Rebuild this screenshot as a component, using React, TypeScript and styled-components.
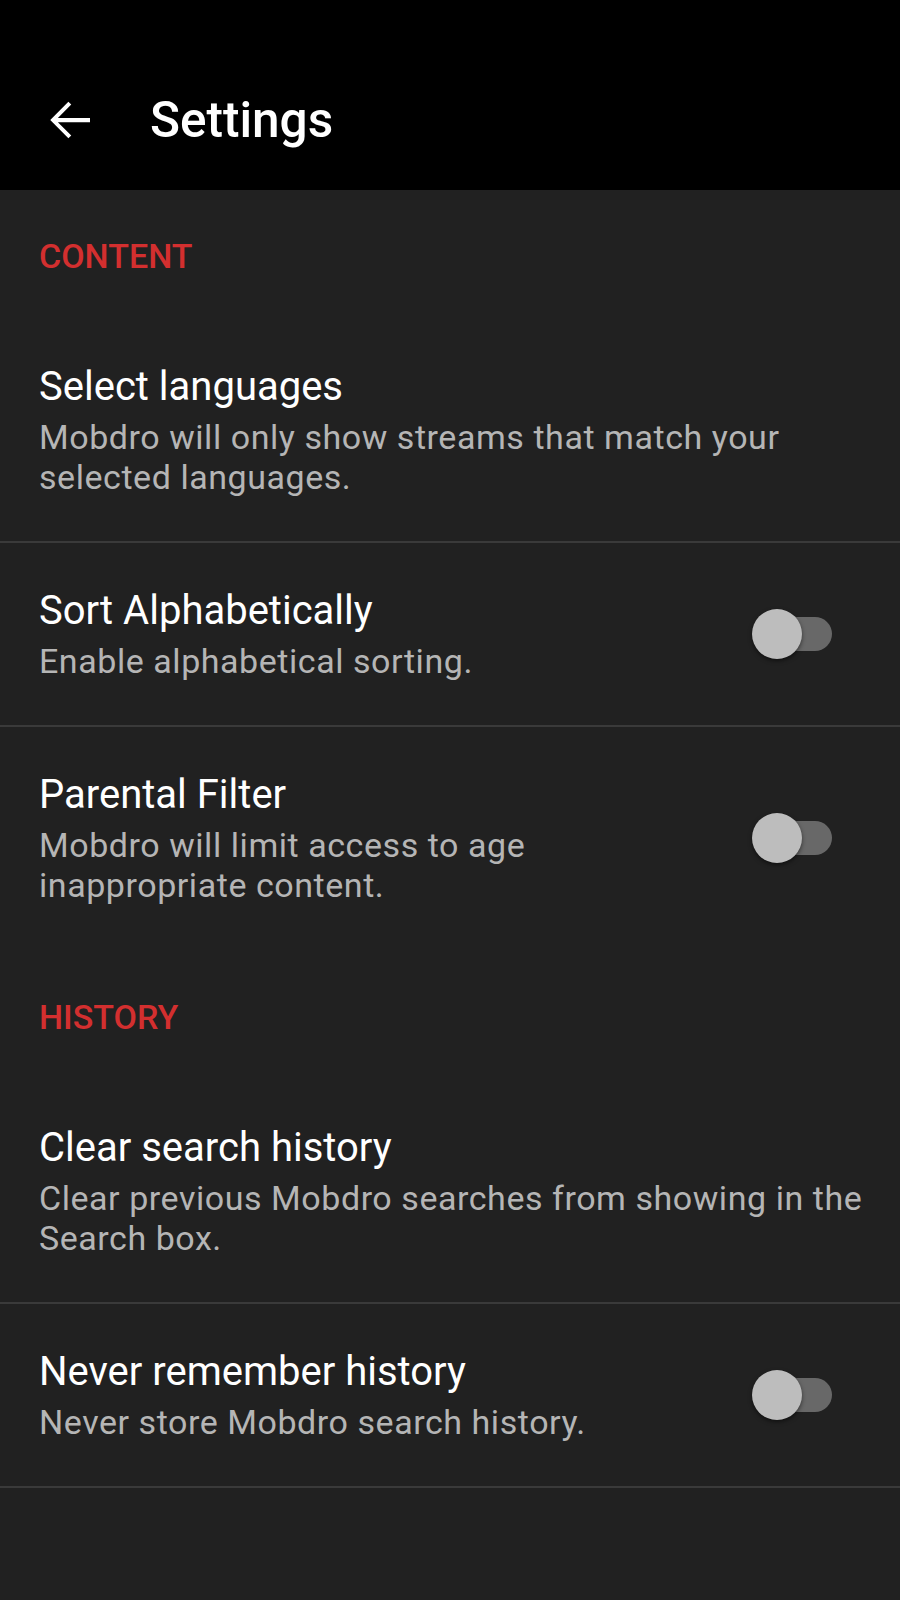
import React, { FC } from 'react'
import styled, { createGlobalStyle } from 'styled-components'

const GlobalStyle = createGlobalStyle`
  html, body {
    margin: 0;
    padding: 0;
    background-color: #212121;
  }
  body {
    font-family: Roboto, 'Liberation Sans', Arial, sans-serif;
    -webkit-font-smoothing: antialiased;
  }
`

const Screen = styled.div`
  min-height: 1600px;
  background-color: #212121;
  display: flex;
  flex-direction: column;
`

const AppBar = styled.header`
  height: 140px;
  padding-top: 50px;
  background-color: #000;
  display: flex;
  align-items: center;
  padding-left: 40px;
`

const BackButton = styled.button`
  width: 60px;
  height: 60px;
  padding: 0;
  margin-right: 50px;
  border: none;
  background: none;
  color: #fff;
  display: flex;
  align-items: center;
  justify-content: center;
  cursor: pointer;
`

const AppBarTitle = styled.h1`
  margin: 0;
  color: #fff;
  font-size: 49.5px;
  font-weight: 500;
  line-height: 56px;
`

const Category = styled.h2`
  margin: 0;
  padding: 46px 39px 43px;
  color: #d32f2f;
  font-size: 34px;
  font-weight: 500;
  line-height: 40px;
`

const PrefRow = styled.div<{ $divider?: boolean }>`
  display: flex;
  align-items: center;
  padding: 44px 20px 44px 39px;
  border-bottom: 2px solid ${(p) => (p.$divider ? '#3a3a3a' : 'transparent')};
`

const PrefText = styled.div<{ $withWidget?: boolean }>`
  flex: 1;
  min-width: 0;
  margin-right: ${(p) => (p.$withWidget ? '32px' : '0')};
`

const PrefTitle = styled.div`
  color: #fff;
  font-size: 40px;
  line-height: 48px;
`

const PrefSummary = styled.div`
  margin-top: 6px;
  color: #b5b5b5;
  font-size: 34px;
  line-height: 40px;
  letter-spacing: 0.55px;
`

const Switch = styled.span`
  position: relative;
  width: 80px;
  height: 50px;
  margin-right: 48px;
  flex-shrink: 0;
`

const SwitchTrack = styled.span`
  position: absolute;
  left: 8px;
  right: 0;
  top: 8px;
  height: 34px;
  border-radius: 17px;
  background-color: #686868;
`

const SwitchThumb = styled.span`
  position: absolute;
  left: 0;
  top: 0;
  width: 50px;
  height: 50px;
  border-radius: 50%;
  background-color: #bdbdbd;
  box-shadow: 0 2px 4px rgba(0, 0, 0, 0.5);
`

const ArrowBack: FC = () => (
  <svg width='60' height='60' viewBox='0 0 24 24' fill='currentColor'>
    <path d='M20 11.15H7.15l5.35-5.35L11.35 4.7 4.1 12l7.25 7.3 1.15-1.1-5.35-5.35H20v-1.7z' />
  </svg>
)

const Toggle: FC = () => (
  <Switch role='switch' aria-checked='false'>
    <SwitchTrack />
    <SwitchThumb />
  </Switch>
)

interface PreferenceProps {
  title: string
  summary: string
  toggle?: boolean
  divider?: boolean
}

const Preference: FC<PreferenceProps> = ({ title, summary, toggle, divider }) => (
  <PrefRow $divider={divider}>
    <PrefText $withWidget={toggle}>
      <PrefTitle>{title}</PrefTitle>
      <PrefSummary>{summary}</PrefSummary>
    </PrefText>
    {toggle && <Toggle />}
  </PrefRow>
)

const App: FC = () => {
  return (
    <Screen>
      <GlobalStyle />
      <AppBar>
        <BackButton aria-label='Back'>
          <ArrowBack />
        </BackButton>
        <AppBarTitle>Settings</AppBarTitle>
      </AppBar>

      <Category>CONTENT</Category>
      <Preference
        title='Select languages'
        summary='Mobdro will only show streams that match your selected languages.'
        divider
      />
      <Preference title='Sort Alphabetically' summary='Enable alphabetical sorting.' toggle divider />
      <Preference
        title='Parental Filter'
        summary='Mobdro will limit access to age inappropriate content.'
        toggle
      />

      <Category>HISTORY</Category>
      <Preference
        title='Clear search history'
        summary='Clear previous Mobdro searches from showing in the Search box.'
        divider
      />
      <Preference
        title='Never remember history'
        summary='Never store Mobdro search history.'
        toggle
        divider
      />
    </Screen>
  )
}

export default App
